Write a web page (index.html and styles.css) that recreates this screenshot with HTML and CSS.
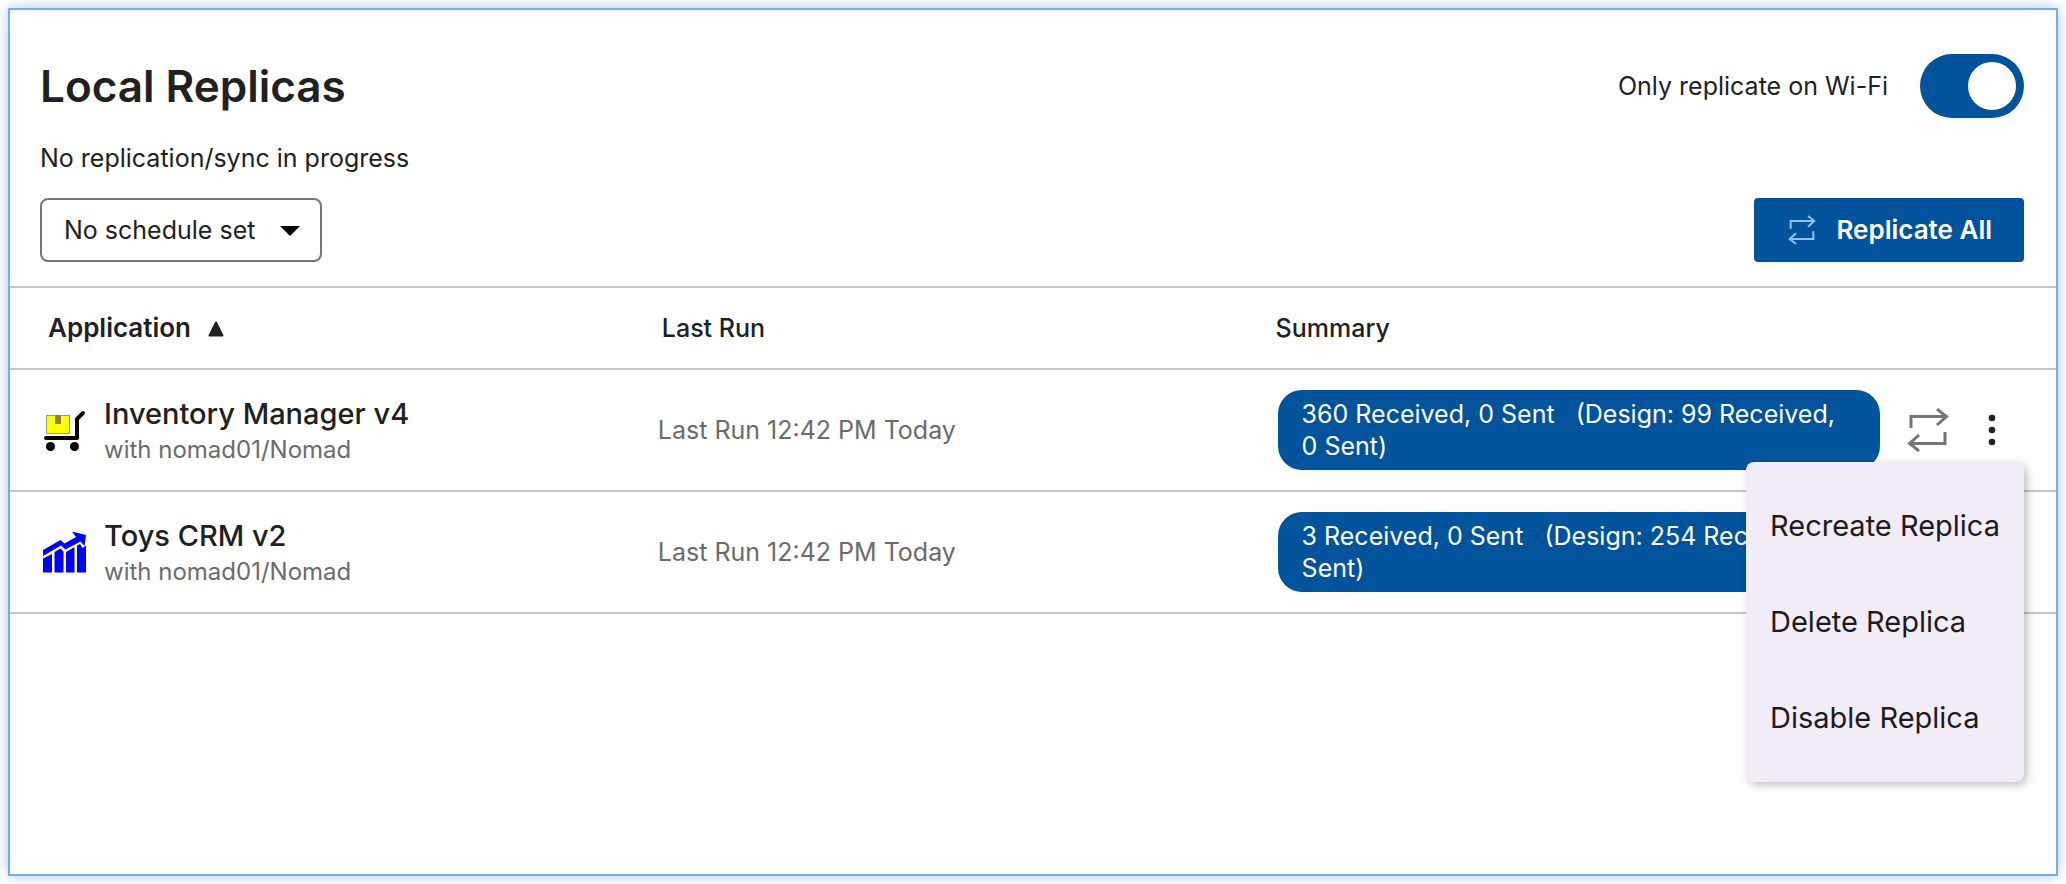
FILE: index.html
```html
<!DOCTYPE html>
<html lang="en">
<head>
    <meta charset="UTF-8">
    <meta name="viewport" content="width=device-width, initial-scale=1.0">
    <title>Local Replicas</title>
    <link rel="stylesheet" href="styles.css">
</head>
<body>
    <main class="panel">
        <header class="panel-header">
            <div class="header-row">
                <h1>Local Replicas</h1>
                <label class="wifi-toggle" for="wifi-only">
                    <span>Only replicate on Wi-Fi</span>
                    <input type="checkbox" id="wifi-only" class="switch" role="switch" checked>
                </label>
            </div>

            <p class="status">No replication/sync in progress</p>

            <div class="header-row">
                <div class="schedule">
                    <select id="schedule" aria-label="Schedule">
                        <option>No schedule set</option>
                        <option>Daily</option>
                        <option>Weekly</option>
                    </select>
                    <svg class="caret" viewBox="0 0 20 10" aria-hidden="true"><path d="M0 0h20L10 10z"/></svg>
                </div>
                <button class="replicate-all" type="button">
                    <svg class="sync-icon" viewBox="0 0 42 44" aria-hidden="true">
                        <path d="M4 20V8.500H39M30 1l9.500 7.500L30 17M38 24v11.500H3M12 27l-9.500 8.500L12 43"/>
                    </svg>
                    Replicate All
                </button>
            </div>
        </header>

        <table class="replicas">
            <colgroup>
                <col class="col-app">
                <col class="col-run">
                <col class="col-summary">
            </colgroup>
            <thead>
                <tr>
                    <th class="sorted" scope="col" aria-sort="ascending">
                        Application
                        <svg class="sort-icon" viewBox="0 0 16 16" aria-hidden="true"><path d="M8 1.500 14.500 14.500H1.500z"/></svg>
                    </th>
                    <th scope="col">Last Run</th>
                    <th scope="col">Summary</th>
                </tr>
            </thead>
            <tbody>
                <!-- Inventory Manager -->
                <tr>
                    <td>
                        <div class="app">
                            <svg class="app-icon" viewBox="0 0 48 48" aria-hidden="true">
                                <rect x="6.500" y="9.500" width="23" height="18" fill="#ff0" stroke="#9a9a6a"/>
                                <path d="M15 9h6v9h-6z" fill="#8a7f35"/>
                                <path d="M6 32h31V13l6-6" fill="none" stroke="#000" stroke-width="4" stroke-linecap="round" stroke-linejoin="round"/>
                                <circle cx="10.500" cy="40.500" r="4.500"/>
                                <circle cx="34.500" cy="40.500" r="4.500"/>
                            </svg>
                            <div class="app-text">
                                <div class="app-name">Inventory Manager v4</div>
                                <div class="app-server">with nomad01/Nomad</div>
                            </div>
                        </div>
                    </td>
                    <td class="last-run">Last Run 12:42 PM Today</td>
                    <td>
                        <div class="summary">
                            <div class="badge">360 Received, 0 Sent&nbsp;&nbsp; (Design: 99 Received,<br>0 Sent)</div>
                            <div class="actions">
                                <button class="icon-btn" type="button" aria-label="Replicate Inventory Manager v4">
                                    <svg class="sync-icon" viewBox="0 0 42 44" aria-hidden="true">
                                        <path d="M4 20V8.500H39M30 1l9.500 7.500L30 17M38 24v11.500H3M12 27l-9.500 8.500L12 43"/>
                                    </svg>
                                </button>
                                <button class="icon-btn" type="button" aria-label="More actions" aria-haspopup="menu" aria-expanded="true">
                                    <svg class="dots-icon" viewBox="0 0 8 32" aria-hidden="true">
                                        <circle cx="4" cy="4" r="3.300"/>
                                        <circle cx="4" cy="16" r="3.300"/>
                                        <circle cx="4" cy="28" r="3.300"/>
                                    </svg>
                                </button>
                                <div class="menu" role="menu">
                                    <button type="button" role="menuitem">Recreate Replica</button>
                                    <button type="button" role="menuitem">Delete Replica</button>
                                    <button type="button" role="menuitem">Disable Replica</button>
                                </div>
                            </div>
                        </div>
                    </td>
                </tr>

                <!-- Toys CRM -->
                <tr>
                    <td>
                        <div class="app">
                            <svg class="app-icon" viewBox="0 0 48 48" aria-hidden="true" fill="#00f">
                                <path d="M3 22 20.500 12 24.500 15.500 36 9 32 3.500 46 7 44.500 18 40.500 13.500 25.500 21.500 21 17.500 3 28z"/>
                                <path d="M3 30.500 12 26V44.500H3zM14.500 24 20.500 20.500 23.500 23.500V44.500H14.500zM26 24 34.500 19V44.500H26zM37 17.500 40 16 42.500 20 46 17.500V44.500H37z"/>
                            </svg>
                            <div class="app-text">
                                <div class="app-name">Toys CRM v2</div>
                                <div class="app-server">with nomad01/Nomad</div>
                            </div>
                        </div>
                    </td>
                    <td class="last-run">Last Run 12:42 PM Today</td>
                    <td>
                        <div class="summary">
                            <div class="badge">3 Received, 0 Sent&nbsp;&nbsp; (Design: 254 Received, 0<br>Sent)</div>
                            <div class="actions">
                                <button class="icon-btn" type="button" aria-label="Replicate Toys CRM v2">
                                    <svg class="sync-icon" viewBox="0 0 42 44" aria-hidden="true">
                                        <path d="M4 20V8.500H39M30 1l9.500 7.500L30 17M38 24v11.500H3M12 27l-9.500 8.500L12 43"/>
                                    </svg>
                                </button>
                                <button class="icon-btn" type="button" aria-label="More actions" aria-haspopup="menu">
                                    <svg class="dots-icon" viewBox="0 0 8 32" aria-hidden="true">
                                        <circle cx="4" cy="4" r="3.300"/>
                                        <circle cx="4" cy="16" r="3.300"/>
                                        <circle cx="4" cy="28" r="3.300"/>
                                    </svg>
                                </button>
                            </div>
                        </div>
                    </td>
                </tr>
            </tbody>
        </table>
    </main>
</body>
</html>
```
FILE: styles.css
```css
* {
    box-sizing: border-box;
}

body {
    margin: 0;
    padding: 8px;
    background: #fff;
    color: #212121;
    font-family: Inter, "Liberation Sans", sans-serif;
    font-size: 25px;
    line-height: 32px;
}

button,
select {
    font: inherit;
    color: inherit;
    cursor: pointer;
}

.panel {
    min-height: calc(100vh - 16px);
    border: 2px solid #74acf4;
    box-shadow: 0 0 12px #a9cdfc;
}

/* Header */
.panel-header {
    padding: 44px 32px 24px 30px;
}

.header-row {
    display: flex;
    justify-content: space-between;
    align-items: center;
}

h1 {
    margin: 0;
    font-size: 44px;
    line-height: 64px;
    font-weight: 600;
}

.wifi-toggle {
    display: flex;
    align-items: center;
    gap: 32px;
    cursor: pointer;
}

.switch {
    appearance: none;
    display: flex;
    justify-content: flex-start;
    width: 104px;
    height: 64px;
    margin: 0;
    padding: 8px;
    border-radius: 32px;
    background: #8d8d8d;
    cursor: pointer;
}

.switch::before {
    content: "";
    width: 48px;
    height: 48px;
    border-radius: 50%;
    background: #fff;
}

.switch:checked {
    justify-content: flex-end;
    background: #01539b;
}

.status {
    margin: 24px 0;
}

.schedule {
    position: relative;
}

.schedule select {
    appearance: none;
    height: 64px;
    padding: 0 64px 0 22px;
    border: 2px solid #767676;
    border-radius: 8px;
    background: #fff;
}

.caret {
    position: absolute;
    top: 28px;
    right: 22px;
    width: 20px;
    height: 10px;
    pointer-events: none;
}

.replicate-all {
    display: flex;
    align-items: center;
    gap: 20px;
    height: 64px;
    padding: 0 32px 0 34px;
    border: none;
    border-radius: 4px;
    background: #01539b;
    color: #fff;
    font-size: 26px;
    font-weight: 600;
}

.replicate-all .sync-icon {
    width: 28px;
    height: 30px;
    stroke: #8fc1f3;
}

.sync-icon {
    width: 42px;
    height: 44px;
    fill: none;
    stroke: #767676;
    stroke-width: 3;
}

/* Replica table */
.replicas {
    width: 100%;
    border-top: 2px solid #c6c6c6;
    border-spacing: 0;
    table-layout: fixed;
}

.col-app,
.col-run {
    width: 30%;
}

.col-summary {
    width: 40%;
}

.replicas th,
.replicas td {
    padding: 0;
    border-bottom: 2px solid #c6c6c6;
    text-align: left;
}

.replicas th {
    height: 82px;
    padding-left: 38px;
    font-weight: 500;
}

.replicas th.sorted {
    font-size: 26px;
    font-weight: 600;
}

.sort-icon {
    width: 16px;
    height: 16px;
    margin-left: 10px;
    fill: #212121;
    stroke: #212121;
    stroke-width: 2;
    stroke-linejoin: round;
}

.replicas td {
    padding: 20px 0 20px 30px;
}

.replicas td.last-run {
    padding-left: 34px;
    color: #6b6b6b;
}

.app {
    display: flex;
    align-items: center;
    gap: 16px;
}

.app-icon {
    width: 48px;
    height: 48px;
}

.app-text {
    padding-top: 4px;
    line-height: 36px;
}

.app-name {
    font-size: 29px;
    font-weight: 500;
}

.app-server {
    color: #6b6b6b;
    font-size: 24px;
}

.summary {
    display: flex;
    align-items: center;
    gap: 16px;
    padding: 0 32px 0 10px;
}

.badge {
    flex: 1;
    padding: 8px 24px;
    border-radius: 24px;
    background: #01539b;
    color: #fff;
}

.actions {
    position: relative;
    display: flex;
}

.icon-btn {
    display: flex;
    justify-content: center;
    align-items: center;
    width: 64px;
    height: 64px;
    padding: 0;
    border: none;
    background: none;
}

.dots-icon {
    width: 8px;
    height: 32px;
    fill: #212121;
}

/* Row menu */
.menu {
    position: absolute;
    z-index: 1;
    top: 100%;
    right: 0;
    padding: 16px 0;
    border-radius: 8px;
    background: #f2ecf7;
    box-shadow: 3px 3px 8px rgba(0, 0, 0, 0.25);
}

.menu button {
    display: block;
    width: 100%;
    height: 96px;
    padding: 0 24px;
    border: none;
    background: none;
    color: #1d1b20;
    font-size: 29px;
    text-align: left;
    white-space: nowrap;
}
```
